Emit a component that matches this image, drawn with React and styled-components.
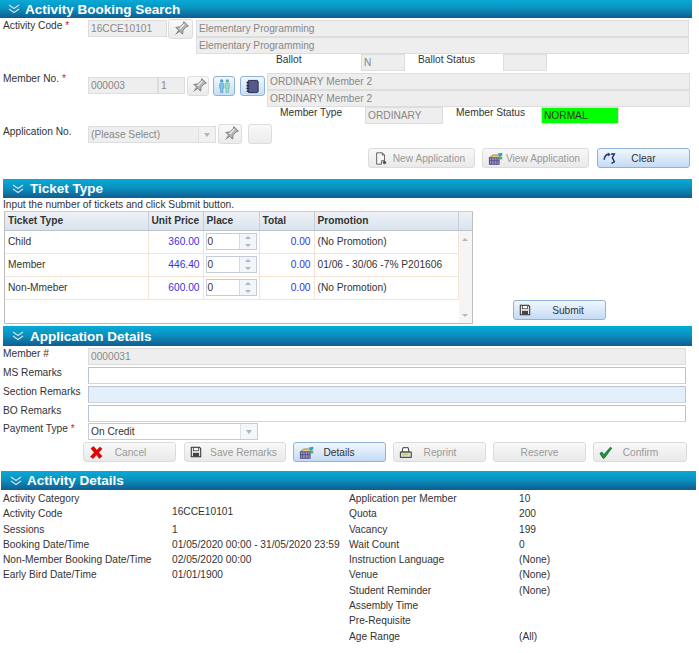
import React from 'react';
import styled, { createGlobalStyle } from 'styled-components';

const GlobalStyle = createGlobalStyle`
  html, body {
    margin: 0;
    padding: 0;
    background: #ffffff;
  }
  body {
    font-family: "Liberation Sans", Arial, sans-serif;
    font-size: 10.2px;
    color: #333333;
  }
`;

const Page = styled.div`
  width: 699px;
  height: 653px;
  overflow: hidden;
  position: relative;
`;

const Header = styled.div`
  display: flex;
  align-items: center;
  box-sizing: border-box;
  height: ${(p) => p.$h || 19}px;
  margin-left: ${(p) => p.$left}px;
  width: ${(p) => p.$w}px;
  margin-top: ${(p) => p.$top || 0}px;
  padding-left: ${(p) => p.$pad || 8}px;
  background: linear-gradient(to bottom, #07aad6 0%, #0a92c0 45%, #115c90 100%);
  color: #ffffff;
  font-size: 13.5px;
  font-weight: bold;
  gap: ${(p) => p.$gap || 5}px;
`;

const Row = styled.div`
  display: flex;
  align-items: flex-start;
  margin-top: ${(p) => p.$top || 0}px;
  padding-left: ${(p) => p.$left || 0}px;
`;

const Label = styled.label`
  box-sizing: border-box;
  flex: none;
  width: ${(p) => p.$w || 88}px;
  padding-left: ${(p) => p.$pad ?? 3}px;
  margin-left: ${(p) => p.$ml || 0}px;
  line-height: 12px;
  color: #333333;
`;

const Star = styled.span`
  color: #d42020;
`;

const TextBox = styled.input`
  box-sizing: border-box;
  flex: none;
  display: block;
  width: ${(p) => p.$w}px;
  height: 17px;
  margin: ${(p) => p.$down || 0}px 0 0 ${(p) => p.$ml || 0}px;
  padding: 0 2px;
  font: inherit;
  outline: none;
  border: 1px solid ${(p) => (p.$on ? '#b9c3d4' : '#dddddd')};
  border-bottom-color: ${(p) => (p.$on ? '#d0d5dc' : '#dddddd')};
  background: ${(p) => p.$bg || (p.$on ? '#ffffff' : '#eeeeee')};
  color: ${(p) => p.$fg || (p.$on ? '#333333' : '#888888')};
`;

const Stack = styled.div`
  display: flex;
  flex-direction: column;
  margin-left: ${(p) => p.$ml || 0}px;
`;

const SelectBox = styled.div`
  box-sizing: border-box;
  flex: none;
  display: flex;
  align-items: stretch;
  width: ${(p) => p.$w}px;
  height: 17px;
  border: 1px solid ${(p) => (p.$on ? '#c5ccd8' : '#dddddd')};
  background: ${(p) => (p.$on ? '#ffffff' : '#eeeeee')};
  color: ${(p) => (p.$on ? '#333333' : '#888888')};
`;

const SelectText = styled.span`
  flex: 1;
  padding-left: 2px;
  line-height: 15px;
`;

const SelectArrow = styled.span`
  flex: none;
  width: 16px;
  display: flex;
  align-items: center;
  justify-content: center;
  border-left: 1px solid #dde1e6;
  background: ${(p) => (p.$on ? '#f3f6fa' : '#f1f1f1')};
  &::after {
    content: '';
    border-left: 3px solid transparent;
    border-right: 3px solid transparent;
    border-top: 4px solid #a9b4c2;
  }
`;

const IconButton = styled.button`
  box-sizing: border-box;
  flex: none;
  display: flex;
  align-items: center;
  justify-content: center;
  width: ${(p) => p.$w || 25}px;
  height: 20px;
  margin: ${(p) => p.$up ?? 0}px 0 0 ${(p) => p.$ml || 0}px;
  padding: 0;
  border-radius: 3px;
  border: 1px solid ${(p) => (p.$on ? '#8fb2d8' : '#dcdcdc')};
  background: ${(p) =>
    p.$on
      ? 'linear-gradient(to bottom, #f2f7fd, #c9dff6)'
      : 'linear-gradient(to bottom, #f9f9f9, #ebebeb)'};
`;

const ActionRow = styled.div`
  display: flex;
  margin-top: ${(p) => p.$top || 0}px;
  padding-left: ${(p) => p.$left}px;
`;

const ActionButton = styled.button`
  box-sizing: border-box;
  flex: none;
  display: flex;
  align-items: center;
  width: ${(p) => p.$w}px;
  height: 20px;
  margin: 0 0 ${(p) => p.$lift || 0}px ${(p) => p.$ml || 0}px;
  padding: 0 0 0 ${(p) => p.$pad ?? 5}px;
  border-radius: 3px;
  font: inherit;
  color: ${(p) => (p.$on ? '#333333' : '#999999')};
  border: 1px solid ${(p) => (p.$on ? '#8fb2d8' : '#dcdcdc')};
  background: ${(p) =>
    p.$on
      ? 'linear-gradient(to bottom, #f2f7fd, #c4dbf5)'
      : 'linear-gradient(to bottom, #f8f8f8, #e9e9e9)'};
`;

const ActionText = styled.span`
  flex: 1;
  text-align: center;
  white-space: nowrap;
  padding-right: ${(p) => p.$right || 0}px;
`;

const Hint = styled.div`
  height: 13px;
  margin-left: 3px;
  line-height: 13px;
`;

const TicketArea = styled.div`
  display: flex;
  align-items: flex-end;
  padding-left: 4px;
`;

const TableFrame = styled.div`
  box-sizing: border-box;
  display: flex;
  width: 469px;
  height: 113px;
  border: 1px solid #bdbdbd;
  border-top-color: #c9ced6;
`;

const TicketTable = styled.table`
  width: 453px;
  flex: none;
  border-collapse: collapse;
  table-layout: fixed;
  align-self: flex-start;
`;

const HeadCell = styled.th`
  box-sizing: border-box;
  height: 18px;
  padding: 0 3px;
  text-align: left;
  font-size: 10.2px;
  font-weight: bold;
  white-space: nowrap;
  color: #333333;
  background: linear-gradient(to bottom, #eef2f7, #d9e2ec);
  border-right: 1px solid #c6cdd6;
  border-bottom: 1px solid #bcc4ce;
`;

const Cell = styled.td`
  box-sizing: border-box;
  height: 23px;
  padding: 0 3px 0 ${(p) => (p.$snug ? 2 : 3)}px;
  text-align: ${(p) => (p.$num ? 'right' : 'left')};
  color: ${(p) => (p.$num ? '#3333dd' : '#333333')};
  border-right: 1px solid #f4e4d6;
  border-bottom: 1px solid #f4e4d6;
  white-space: nowrap;
`;

const Spinner = styled.div`
  box-sizing: border-box;
  display: flex;
  width: 51px;
  height: 17px;
  border: 1px solid #c5ccd8;
  background: #ffffff;
`;

const SpinnerValue = styled.span`
  flex: 1;
  padding-left: 1px;
  line-height: 15px;
`;

const SpinnerArrows = styled.span`
  flex: none;
  display: flex;
  flex-direction: column;
  width: 16px;
  border-left: 1px solid #d5dae2;
`;

const SpinnerArrow = styled.span`
  flex: 1;
  display: flex;
  align-items: center;
  justify-content: center;
  background: #f2f5f9;
  &::after {
    content: '';
    border-left: 3px solid transparent;
    border-right: 3px solid transparent;
    border-${(p) => (p.$down ? 'top' : 'bottom')}: 3px solid #a9b7c9;
  }
`;

const ScrollRail = styled.div`
  flex: 1;
  display: flex;
  flex-direction: column;
  background: #f5f5f5;
`;

const RailHead = styled.div`
  height: 18px;
  background: linear-gradient(to bottom, #eef2f7, #d9e2ec);
  border-bottom: 1px solid #bcc4ce;
`;

const RailBody = styled.div`
  flex: 1;
  display: flex;
  flex-direction: column;
  justify-content: space-between;
  align-items: center;
  padding: 7px 0 6px;
`;

const RailArrow = styled.span`
  border-left: 3px solid transparent;
  border-right: 3px solid transparent;
  border-${(p) => (p.$down ? 'top' : 'bottom')}: 3px solid #b5b5b5;
`;

const DetailsGrid = styled.div`
  display: grid;
  grid-template-columns: 348px 1fr;
  margin-top: 1px;
`;

const DetailColumn = styled.div`
  display: grid;
  grid-template-columns: ${(p) => p.$label}px 1fr;
  grid-auto-rows: 15.3px;
  padding-left: ${(p) => p.$left}px;
  line-height: 16px;
`;

const DetailValue = styled.span`
  white-space: nowrap;
  position: relative;
  top: ${(p) => (p.$raise ? -2 : 0)}px;
`;

const PinIcon = () => (
  <svg width="17" height="17" viewBox="0 0 16 16">
    <g transform="rotate(45 8 8)">
      <path d="M5 0.5h6l-.9 1.8v4.4l2.4 3H3.5l2.4-3V2.3z" fill="#b4b4b4" stroke="#777777" strokeWidth="0.8" />
      <path d="M7 2v6" stroke="#f4f4f4" strokeWidth="1.2" />
      <path d="M7 10h2l-1 5.5z" fill="#7d7d7d" />
    </g>
  </svg>
);

const PeopleIcon = () => (
  <svg width="15" height="16" viewBox="0 0 16 16">
    <circle cx="5" cy="2.6" r="1.8" fill="#4a9bd6" />
    <path d="M2.8 5.2h4.4v5.2H6.4V15H3.6v-4.6h-.8z" fill="#7fc0ea" stroke="#3f8fc8" strokeWidth="0.5" />
    <circle cx="11" cy="2.6" r="1.8" fill="#4fb79c" />
    <path d="M8.8 5.2h4.4v5.2h-.8V15H9.6v-4.6h-.8z" fill="#9adcc4" stroke="#4aa98e" strokeWidth="0.5" />
  </svg>
);

const BookIcon = () => (
  <svg width="15" height="15" viewBox="0 0 16 16">
    <rect x="3" y="1.5" width="11" height="13" rx="1.5" fill="#555a8c" stroke="#23253f" />
    <path d="M1.5 4h3M1.5 7h3M1.5 10h3M1.5 13h3" stroke="#23253f" strokeWidth="1.2" />
  </svg>
);

const NewDocIcon = () => (
  <svg width="14" height="15" viewBox="0 0 16 16">
    <path d="M3 1.5h6.5L12 4v6.5H8.5V14.5H3z" fill="#f5f5f5" stroke="#555555" />
    <path d="M9.5 1.5V4H12" fill="none" stroke="#555555" />
    <path d="M12 10.5v4M10 12.5h4M10.6 11l2.8 3M13.4 11l-2.8 3" stroke="#444444" />
  </svg>
);

const ViewIcon = () => (
  <svg width="16" height="15" viewBox="0 0 18 16">
    <rect x="1.5" y="7" width="11" height="7.5" fill="#9c8ec8" stroke="#4a4a7c" />
    <path d="M4 7v7.5M7 7v7.5M10 7v7.5M1.5 10.5h11" stroke="#3b3b78" strokeWidth="0.7" />
    <path d="M1.5 7l4-3h8l-1 3z" fill="#e8cf7a" stroke="#6b5c2a" strokeWidth="0.7" />
    <path d="M11 2.5l5-1v3l-3 1.5z" fill="#2f9fd0" />
    <path d="M13 6h3v3h-3z" fill="#4caf50" />
  </svg>
);

const ClearIcon = () => (
  <svg width="13" height="13" viewBox="0 0 16 16">
    <path d="M1.5 9.5C1.5 5 4.5 2.5 7.5 3" fill="none" stroke="#2b3a7a" strokeWidth="2" />
    <path d="M6 0.5l3.5 2.5-3 2.5z" fill="#2b3a7a" />
    <path d="M10 2.5h4l-2.5 4.5 2.5 5-3.5 2" fill="none" stroke="#1d2a5e" strokeWidth="1.7" />
  </svg>
);

const SaveIcon = () => (
  <svg width="12" height="12" viewBox="0 0 14 14">
    <path d="M1.5 1.5h9.5l1.5 1.5v9.5h-11z" fill="#e6e6e6" stroke="#333333" strokeWidth="1.2" />
    <rect x="4" y="2" width="6" height="3.5" fill="#ffffff" stroke="#333333" strokeWidth="0.8" />
    <rect x="3.5" y="8" width="7" height="4.5" fill="#444444" />
  </svg>
);

const CancelIcon = () => (
  <svg width="15" height="15" viewBox="0 0 16 16">
    <path d="M2 3.5l3-2 3.5 4 3-3.5 2.5 2-3.5 4 3.5 4-3 2.5-3-4-3.5 4L1.5 12.5l4-4.5z" fill="#e80000" stroke="#8a0000" strokeWidth="0.4" />
  </svg>
);

const PrintIcon = () => (
  <svg width="14" height="13" viewBox="0 0 16 14">
    <path d="M4.5 1.5h6l1 5h-8z" fill="#ffffff" stroke="#222222" />
    <rect x="1.5" y="6.5" width="12.5" height="6" fill="#d9d9d9" stroke="#222222" />
    <rect x="4" y="8.5" width="6" height="1.5" fill="#c8c83a" />
  </svg>
);

const ConfirmIcon = () => (
  <svg width="14" height="13" viewBox="0 0 16 14">
    <path d="M1 8l2.5-1.5 2 3L13 1l1.5 1L6 13.5H4.5z" fill="#17a317" stroke="#0d2d7a" strokeWidth="0.7" />
  </svg>
);

const Chevrons = () => (
  <svg width="14" height="10" viewBox="0 0 14 10">
    <path d="M2 1l5 3.5L12 1M2 5l5 3.5L12 5" fill="none" stroke="#d5dfe9" strokeWidth="1.2" />
  </svg>
);

const tickets = [
  { name: 'Child', price: '360.00', promo: '(No Promotion)' },
  { name: 'Member', price: '446.40', promo: '01/06 - 30/06 -7% P201606' },
  { name: 'Non-Mmeber', price: '600.00', promo: '(No Promotion)' },
];

const leftDetails = [
  ['Activity Category', ''],
  ['Activity Code', '16CCE10101', true],
  ['Sessions', '1'],
  ['Booking Date/Time', '01/05/2020 00:00 - 31/05/2020 23:59'],
  ['Non-Member Booking Date/Time', '02/05/2020 00:00'],
  ['Early Bird Date/Time', '01/01/1900'],
];

const rightDetails = [
  ['Application per Member', '10'],
  ['Quota', '200'],
  ['Vacancy', '199'],
  ['Wait Count', '0'],
  ['Instruction Language', '(None)'],
  ['Venue', '(None)'],
  ['Student Reminder', '(None)'],
  ['Assembly Time', ''],
  ['Pre-Requisite', ''],
  ['Age Range', '(All)'],
];

const App = () => (
  <Page>
    <GlobalStyle />

    <Header $w={692} $left={0} $h={18} $pad={7} $gap={4}>
      <Chevrons />
      Activity Booking Search
    </Header>

    <Row $top={2}>
      <Label>Activity Code <Star>*</Star></Label>
      <TextBox readOnly value="16CCE10101" $w={79} />
      <IconButton $ml={1} $up={-1}><PinIcon /></IconButton>
      <Stack $ml={3}>
        <TextBox readOnly value="Elementary Programming" $w={493} />
        <TextBox readOnly value="Elementary Programming" $w={493} />
      </Stack>
    </Row>
    <Row $left={276}>
      <Label $w={85} $pad={0}>Ballot</Label>
      <TextBox readOnly value="N" $w={44} />
      <Label $w={85} $pad={0} $ml={13}>Ballot Status</Label>
      <TextBox readOnly value="" $w={44} />
    </Row>

    <Row $top={2}>
      <Label>Member No. <Star>*</Star></Label>
      <TextBox readOnly value="000003" $w={70} $down={4} />
      <TextBox readOnly value="1" $w={27} $down={4} />
      <IconButton $w={22} $ml={2} $up={3}><PinIcon /></IconButton>
      <IconButton $w={22} $ml={4} $up={3} $on><PeopleIcon /></IconButton>
      <IconButton $w={25} $ml={5} $up={3} $on><BookIcon /></IconButton>
      <Stack $ml={2}>
        <TextBox readOnly value="ORDINARY Member 2" $w={423} />
        <TextBox readOnly value="ORDINARY Member 2" $w={423} />
      </Stack>
    </Row>
    <Row $left={280}>
      <Label $w={85} $pad={0}>Member Type</Label>
      <TextBox readOnly value="ORDINARY" $w={78} />
      <Label $w={85} $pad={0} $ml={13}>Member Status</Label>
      <TextBox readOnly value="NORMAL" $w={78} $bg="#00ff00" $fg="#333333" />
    </Row>

    <Row $top={2}>
      <Label>Application No.</Label>
      <SelectBox $w={128}>
        <SelectText>(Please Select)</SelectText>
        <SelectArrow />
      </SelectBox>
      <IconButton $w={24} $ml={2} $up={-2}><PinIcon /></IconButton>
      <IconButton $w={24} $ml={6} $up={-2} />
    </Row>

    <ActionRow $top={4} $left={368}>
      <ActionButton $w={107}><NewDocIcon /><ActionText $right={4}>New Application</ActionText></ActionButton>
      <ActionButton $w={107} $ml={7}><ViewIcon /><ActionText $right={6}>View Application</ActionText></ActionButton>
      <ActionButton $w={93} $ml={8} $on><ClearIcon /><ActionText $right={18}>Clear</ActionText></ActionButton>
    </ActionRow>

    <Header $w={689} $left={3} $top={11}>
      <Chevrons />
      Ticket Type
    </Header>
    <Hint>Input the number of tickets and click Submit button.</Hint>
    <TicketArea>
      <TableFrame>
        <TicketTable>
          <colgroup>
            <col style={{ width: 143 }} />
            <col style={{ width: 55 }} />
            <col style={{ width: 56 }} />
            <col style={{ width: 55 }} />
            <col style={{ width: 144 }} />
          </colgroup>
          <thead>
            <tr>
              <HeadCell>Ticket Type</HeadCell>
              <HeadCell>Unit Price</HeadCell>
              <HeadCell>Place</HeadCell>
              <HeadCell>Total</HeadCell>
              <HeadCell>Promotion</HeadCell>
            </tr>
          </thead>
          <tbody>
            {tickets.map((t) => (
              <tr key={t.name}>
                <Cell>{t.name}</Cell>
                <Cell $num>{t.price}</Cell>
                <Cell $snug>
                  <Spinner>
                    <SpinnerValue>0</SpinnerValue>
                    <SpinnerArrows>
                      <SpinnerArrow />
                      <SpinnerArrow $down />
                    </SpinnerArrows>
                  </Spinner>
                </Cell>
                <Cell $num>0.00</Cell>
                <Cell>{t.promo}</Cell>
              </tr>
            ))}
          </tbody>
        </TicketTable>
        <ScrollRail>
          <RailHead />
          <RailBody>
            <RailArrow />
            <RailArrow $down />
          </RailBody>
        </ScrollRail>
      </TableFrame>
      <ActionButton $w={93} $ml={40} $lift={4} $on>
        <SaveIcon />
        <ActionText>Submit</ActionText>
      </ActionButton>
    </TicketArea>

    <Header $w={689} $left={3} $top={2} $h={20}>
      <Chevrons />
      Application Details
    </Header>
    <Row $top={2}>
      <Label>Member #</Label>
      <TextBox readOnly value="0000031" $w={598} />
    </Row>
    <Row $top={2}>
      <Label>MS Remarks</Label>
      <TextBox readOnly value="" $w={598} $on />
    </Row>
    <Row $top={2}>
      <Label>Section Remarks</Label>
      <TextBox readOnly value="" $w={598} $on $bg="#e3effb" />
    </Row>
    <Row $top={2}>
      <Label>BO Remarks</Label>
      <TextBox readOnly value="" $w={598} $on />
    </Row>
    <Row $top={1}>
      <Label>Payment Type <Star>*</Star></Label>
      <SelectBox $w={170} $on>
        <SelectText>On Credit</SelectText>
        <SelectArrow $on />
      </SelectBox>
    </Row>

    <ActionRow $top={2} $left={83}>
      <ActionButton $w={93}><CancelIcon /><ActionText $right={18}>Cancel</ActionText></ActionButton>
      <ActionButton $w={102} $ml={8}><SaveIcon /><ActionText>Save Remarks</ActionText></ActionButton>
      <ActionButton $w={93} $ml={7} $on><ViewIcon /><ActionText $right={22}>Details</ActionText></ActionButton>
      <ActionButton $w={93} $ml={7}><PrintIcon /><ActionText $right={18}>Reprint</ActionText></ActionButton>
      <ActionButton $w={93} $ml={7} $pad={0}><ActionText>Reserve</ActionText></ActionButton>
      <ActionButton $w={94} $ml={7}><ConfirmIcon /><ActionText $right={18}>Confirm</ActionText></ActionButton>
    </ActionRow>

    <Header $w={695} $left={1} $top={9} $gap={4}>
      <Chevrons />
      Activity Details
    </Header>
    <DetailsGrid>
      <DetailColumn $label={169} $left={3}>
        {leftDetails.map(([k, v, raise]) => (
          <React.Fragment key={k}>
            <span>{k}</span>
            <DetailValue $raise={raise}>{v}</DetailValue>
          </React.Fragment>
        ))}
      </DetailColumn>
      <DetailColumn $label={170} $left={1}>
        {rightDetails.map(([k, v]) => (
          <React.Fragment key={k}>
            <span>{k}</span>
            <DetailValue>{v}</DetailValue>
          </React.Fragment>
        ))}
      </DetailColumn>
    </DetailsGrid>
  </Page>
);

export default App;
